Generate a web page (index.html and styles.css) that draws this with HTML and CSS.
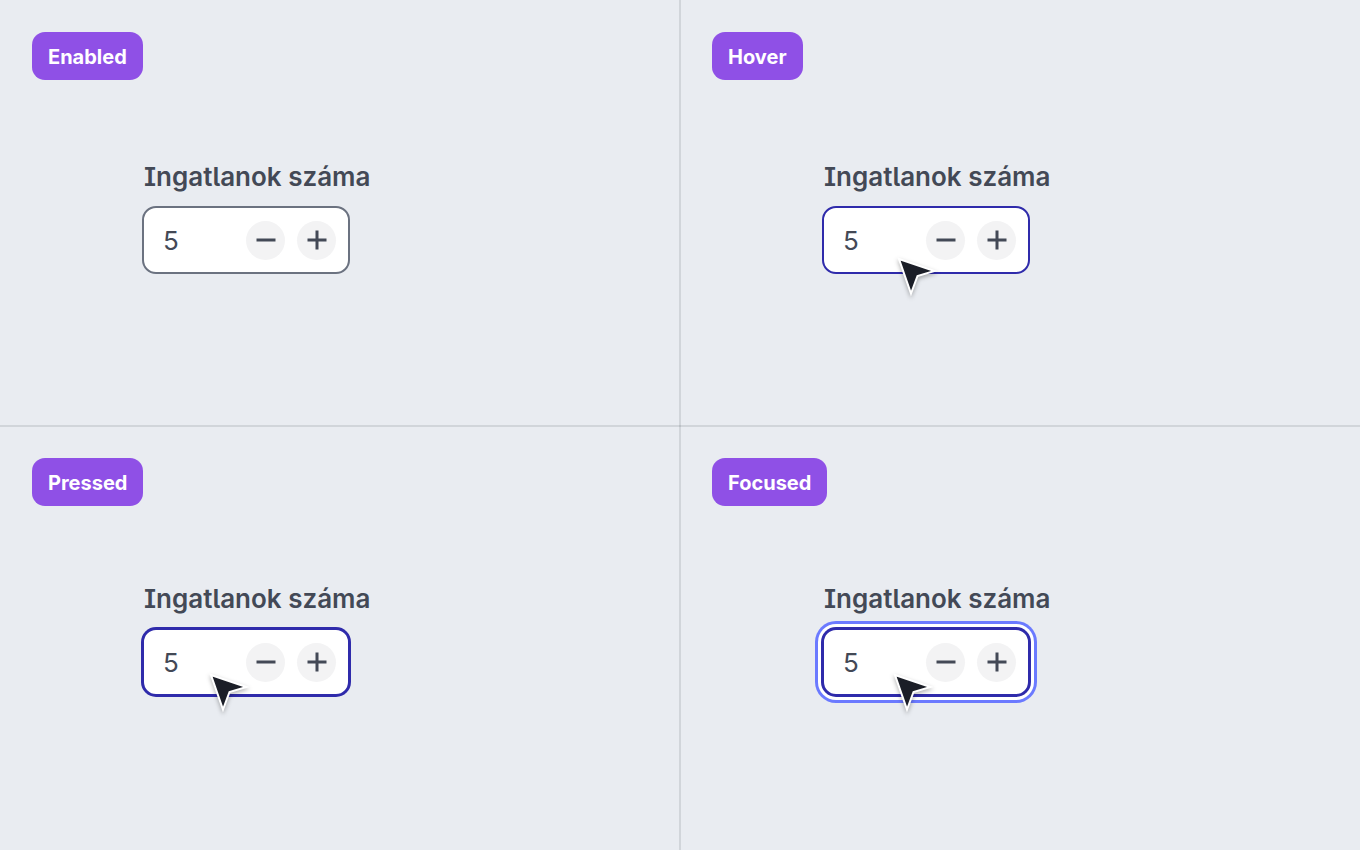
FILE: index.html
```html
<!DOCTYPE html>
<html lang="hu">
<head>
    <meta charset="UTF-8">
    <meta name="viewport" content="width=device-width, initial-scale=1">
    <title>Stepper states</title>
    <link rel="stylesheet" href="styles.css">
</head>
<body>

<!-- shared icons -->
<svg class="sprite" aria-hidden="true">
    <symbol id="minus" viewBox="0 0 20 20"><path d="M0.500 10h19"/></symbol>
    <symbol id="plus" viewBox="0 0 20 20"><path d="M0.500 10h19M10 0.500v19"/></symbol>
    <symbol id="pointer" viewBox="0 0 40 40"><path d="M2 2L37.500 14L20.500 19L14 36.500Z"/></symbol>
</svg>

<main class="board">
    <section class="state">
        <h2 class="badge">Enabled</h2>
        <div class="field">
            <label for="count-enabled">Ingatlanok száma</label>
            <div class="stepper">
                <input type="text" inputmode="numeric" id="count-enabled" value="5">
                <button type="button" aria-label="Csökkentés"><svg><use href="#minus"/></svg></button>
                <button type="button" aria-label="Növelés"><svg><use href="#plus"/></svg></button>
            </div>
        </div>
    </section>

    <section class="state">
        <h2 class="badge">Hover</h2>
        <div class="field">
            <label for="count-hover">Ingatlanok száma</label>
            <div class="stepper hover">
                <input type="text" inputmode="numeric" id="count-hover" value="5">
                <button type="button" aria-label="Csökkentés"><svg><use href="#minus"/></svg></button>
                <button type="button" aria-label="Növelés"><svg><use href="#plus"/></svg></button>
                <svg class="cursor"><use href="#pointer"/></svg>
            </div>
        </div>
    </section>

    <section class="state lower">
        <h2 class="badge">Pressed</h2>
        <div class="field">
            <label for="count-pressed">Ingatlanok száma</label>
            <div class="stepper pressed">
                <input type="text" inputmode="numeric" id="count-pressed" value="5">
                <button type="button" aria-label="Csökkentés"><svg><use href="#minus"/></svg></button>
                <button type="button" aria-label="Növelés"><svg><use href="#plus"/></svg></button>
                <svg class="cursor"><use href="#pointer"/></svg>
            </div>
        </div>
    </section>

    <section class="state lower">
        <h2 class="badge">Focused</h2>
        <div class="field">
            <label for="count-focused">Ingatlanok száma</label>
            <div class="stepper focused">
                <input type="text" inputmode="numeric" id="count-focused" value="5">
                <button type="button" aria-label="Csökkentés"><svg><use href="#minus"/></svg></button>
                <button type="button" aria-label="Növelés"><svg><use href="#plus"/></svg></button>
                <svg class="cursor"><use href="#pointer"/></svg>
            </div>
        </div>
    </section>
</main>

</body>
</html>
```
FILE: styles.css
```css
* {
    box-sizing: border-box;
}
body {
    margin: 0;
    font-family: Inter, sans-serif;
    color: #434956;
    background: #e9ecf1;
}
.sprite {
    display: none;
}
/* the gradient is the vertical divider */
.board {
    display: grid;
    grid-template-columns: 1fr 1fr;
    grid-template-rows: 1fr 1fr;
    min-height: 100vh;
    background: linear-gradient(#d1d5da, #d1d5da) center / 2px 100% no-repeat;
}
.state {
    display: flex;
    flex-direction: column;
    align-items: flex-start;
    gap: 80px;
    padding: 32px;
}
.lower {
    gap: 76px;
    padding-top: 31px;
    border-top: 2px solid rgba(0, 10, 20, 0.1);
}
.badge {
    margin: 0;
    padding: 13px 16px 11px;
    border-radius: 13px;
    background: #8f50e6;
    color: white;
    font-size: 20px;
    font-weight: 700;
    line-height: 24px;
}
.field {
    display: flex;
    flex-direction: column;
    align-items: flex-start;
    gap: 13px;
    margin-left: 110px;
}
label {
    padding: 1px 0 0 2px;
    font-size: 26px;
    font-weight: 600;
    line-height: 32px;
    font-feature-settings: "cv05", "cv08", "ss02";
}
.stepper {
    position: relative;
    display: flex;
    align-items: center;
    gap: 12px;
    width: 208px;
    height: 68px;
    padding: 0 12px 0 19px;
    border: 2px solid #6b7280;
    border-radius: 14px;
    background: white;
}
.stepper input {
    flex: 1;
    min-width: 0;
    padding: 0;
    border: 0;
    outline: 0;
    background: none;
    color: inherit;
    font: 26px Inter, sans-serif;
}
.stepper button {
    display: grid;
    place-items: center;
    width: 39px;
    height: 39px;
    padding: 0;
    border: 0;
    border-radius: 50%;
    background: #f3f3f4;
    color: inherit;
    cursor: pointer;
}
.stepper button svg {
    width: 20px;
    height: 20px;
    fill: none;
    stroke: currentColor;
    stroke-width: 3;
}
.hover,
.pressed,
.focused {
    border-color: #2f2bab;
}
.pressed {
    box-shadow: 0 0 0 1px #2f2bab;
}
.focused {
    box-shadow: 0 0 0 1px #2f2bab, 0 0 0 4px white, 0 0 0 7px #6b7aff;
}
.cursor {
    position: absolute;
    top: 49px;
    left: 73px;
    width: 40px;
    height: 40px;
    fill: #1b1e27;
    stroke: white;
    stroke-width: 2;
    filter: drop-shadow(0 2px 2px rgba(0, 0, 0, 0.3));
    pointer-events: none;
}
.pressed .cursor {
    top: 43px;
    left: 65px;
}
.focused .cursor {
    top: 43px;
    left: 69px;
}
```
